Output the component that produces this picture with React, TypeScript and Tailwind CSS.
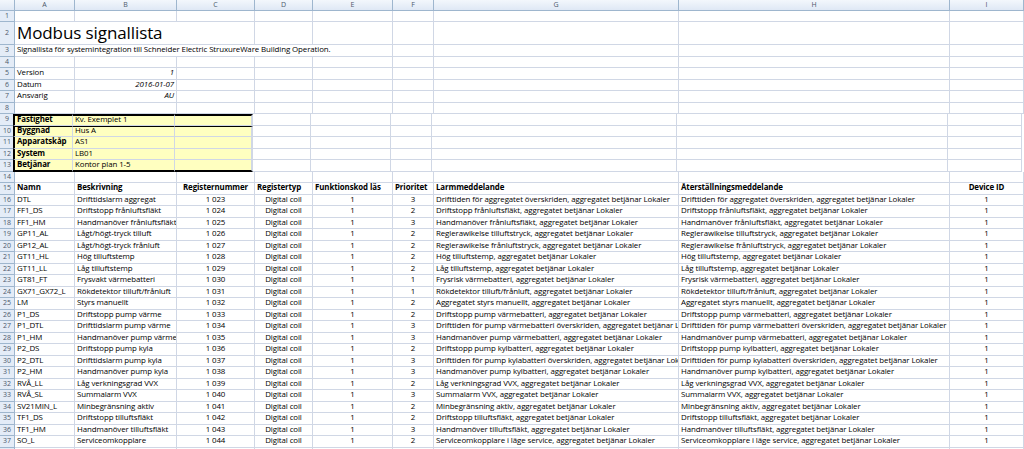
import React from "react";

const W = [15, 60, 102, 78, 58, 80, 41, 245, 271, 74];
const letters = ["", "A", "B", "C", "D", "E", "F", "G", "H", "I"];
const S = ", aggregatet betjänar Lokaler";
type R = [string, string, string, string, string];
const data: R[] = [
  ["DTL", "Drifttidslarm aggregat", "1 023", "3", "Drifttiden för aggregatet överskriden"],
  ["FF1_DS", "Driftstopp frånluftsfläkt", "1 024", "2", "Driftstopp frånluftsfläkt"],
  ["FF1_HM", "Handmanöver frånluftsfläkt", "1 025", "3", "Handmanöver frånluftsfläkt"],
  ["GP11_AL", "Lågt/högt-tryck tilluft", "1 026", "2", "Reglerawikelse tilluftstryck"],
  ["GP12_AL", "Lågt/högt-tryck frånluft", "1 027", "2", "Reglerawikelse frånluftstryck"],
  ["GT11_HL", "Hög tilluftstemp", "1 028", "2", "Hög tilluftstemp"],
  ["GT11_LL", "Låg tilluftstemp", "1 029", "2", "Låg tilluftstemp"],
  ["GT81_FT", "Frysvakt värmebatteri", "1 030", "1", "Frysrisk värmebatteri"],
  ["GX71_GX72_L", "Rökdetektor tilluft/frånluft", "1 031", "1", "Rökdetektor tilluft/frånluft"],
  ["LM", "Styrs manuellt", "1 032", "2", "Aggregatet styrs manuellt"],
  ["P1_DS", "Driftstopp pump värme", "1 033", "2", "Driftstopp pump värmebatteri"],
  ["P1_DTL", "Drifttidslarm pump värme", "1 034", "3", "Drifttiden för pump värmebatteri överskriden"],
  ["P1_HM", "Handmanöver pump värme", "1 035", "3", "Handmanöver pump värmebatteri"],
  ["P2_DS", "Driftstopp pump kyla", "1 036", "2", "Driftstopp pump kylbatteri"],
  ["P2_DTL", "Drifttidslarm pump kyla", "1 037", "3", "Drifttiden för pump kylabatteri överskriden"],
  ["P2_HM", "Handmanöver pump kyla", "1 038", "3", "Handmanöver pump kylbatteri"],
  ["RVÅ_LL", "Låg verkningsgrad VVX", "1 039", "2", "Låg verkningsgrad VVX"],
  ["RVÅ_SL", "Summalarm VVX", "1 040", "3", "Summalarm VVX"],
  ["SV21MIN_L", "Minbegränsning aktiv", "1 041", "2", "Minbegränsning aktiv"],
  ["TF1_DS", "Driftstopp tilluftsfläkt", "1 042", "2", "Driftstopp tilluftsfläkt"],
  ["TF1_HM", "Handmanöver tilluftsfläkt", "1 043", "3", "Handmanöver tilluftsfläkt"],
  ["SO_L", "Serviceomkopplare", "1 044", "2", "Serviceomkopplare i läge service"],
];

type Cell = { t?: React.ReactNode; a?: "l" | "c" | "r"; cls?: string; span?: number };

function Row({ n, h = "h-[11.5px]", cells = [] }: { n: number; h?: string; cells?: Cell[] }) {
  const out: React.ReactNode[] = [];
  let ci = 1;
  let k = 0;
  while (ci < W.length) {
    const c = cells[k] || {};
    const span = c.span || 1;
    let w = 0;
    for (let j = ci; j < ci + span && j < W.length; j++) w += W[j];
    const al = c.a === "c" ? "justify-center" : c.a === "r" ? "justify-end" : "justify-start";
    out.push(
      <div
        key={ci}
        style={{ width: w }}
        className={`shrink-0 flex items-center ${al} px-[2px] border-r border-b border-[#d0d7e5] overflow-hidden whitespace-nowrap ${c.cls || ""}`}
      >
        {c.t}
      </div>
    );
    ci += span;
    k++;
  }
  return (
    <div className={`flex ${h}`}>
      <div className="w-[15px] shrink-0 flex items-center justify-center bg-[#e4ecf7] border-r border-b border-[#9eb6ce] text-[7px] text-[#4c596b]">
        {n}
      </div>
      {out}
    </div>
  );
}

const Y = "bg-[#ffffc0]";

export default function App() {
  const rows: React.ReactNode[] = [];
  rows.push(<Row key={1} n={1} h="h-[11px]" />);
  rows.push(
    <Row key={2} n={2} h="h-[23px]" cells={[{ t: <span className="text-[17px] text-black">Modbus signallista</span>, span: 3 }]} />
  );
  rows.push(
    <Row key={3} n={3} cells={[{ t: "Signallista för systemintegration till Schneider Electric StruxureWare Building Operation.", span: 5 }]} />
  );
  rows.push(<Row key={4} n={4} />);
  rows.push(<Row key={5} n={5} cells={[{ t: "Version" }, { t: "1", a: "r", cls: "italic" }]} />);
  rows.push(<Row key={6} n={6} cells={[{ t: "Datum" }, { t: "2016-01-07", a: "r", cls: "italic" }]} />);
  rows.push(<Row key={7} n={7} cells={[{ t: "Ansvarig" }, { t: "AU", a: "r", cls: "italic" }]} />);
  rows.push(<Row key={8} n={8} />);
  const yel: [string, string][] = [
    ["Fastighet", "Kv. Exemplet 1"],
    ["Byggnad", "Hus A"],
    ["Apparatskåp", "AS1"],
    ["System", "LB01"],
    ["Betjänar", "Kontor plan 1-5"],
  ];
  yel.forEach(([a, b], i) => {
    const top = i === 0 ? " !border-t-2 !border-t-black" : i === 1 ? " !border-t-[1px] !border-t-black" : "";
    const bot = i === 4 ? " !border-b-2 !border-b-black" : "";
    rows.push(
      <Row
        key={9 + i}
        n={9 + i}
        cells={[
          { t: a, cls: `${Y} font-bold !border-l-2 !border-l-black -ml-[2px] !w-[62px]${top}${bot}` },
          { t: b, cls: `${Y}${top}${bot}` },
          { t: "", cls: `${Y} !border-r-2 !border-r-black${top}${bot}` },
        ]}
      />
    );
  });
  rows.push(<Row key={14} n={14} />);
  rows.push(
    <Row
      key={15}
      n={15}
      cells={[
        { t: "Namn", cls: "font-bold" },
        { t: "Beskrivning", cls: "font-bold" },
        { t: "Registernummer", a: "c", cls: "font-bold" },
        { t: "Registertyp", a: "l", cls: "font-bold" },
        { t: "Funktionskod läs", a: "l", cls: "font-bold" },
        { t: "Prioritet", a: "l", cls: "font-bold" },
        { t: "Larmmeddelande", cls: "font-bold" },
        { t: "Återställningsmeddelande", cls: "font-bold" },
        { t: "Device ID", a: "c", cls: "font-bold" },
      ]}
    />
  );
  data.forEach((d, i) => {
    rows.push(
      <Row
        key={16 + i}
        n={16 + i}
        cells={[
          { t: d[0] },
          { t: d[1] },
          { t: d[2], a: "c" },
          { t: "Digital coil", a: "c" },
          { t: "1", a: "c" },
          { t: d[3], a: "c" },
          { t: d[4] + S },
          { t: d[4] + S },
          { t: "1", a: "c" },
        ]}
      />
    );
  });
  rows.push(<Row key={38} n={38} />);

  return (
    <div className="w-[1024px] h-[449px] overflow-hidden bg-white text-[7.9px] text-black" style={{ fontFamily: "'Open Sans', 'Liberation Sans', sans-serif", letterSpacing: "-0.1px" }}>
      <div className="flex h-[11px]">
        {W.map((w, i) => (
          <div
            key={i}
            style={{ width: w }}
            className="shrink-0 flex items-center justify-center bg-gradient-to-b from-[#f3f7fc] to-[#dfe8f5] border-r border-b border-[#9eb6ce] text-[7px] text-[#4c596b]"
          >
            {letters[i]}
          </div>
        ))}
      </div>
      {rows}
    </div>
  );
}
